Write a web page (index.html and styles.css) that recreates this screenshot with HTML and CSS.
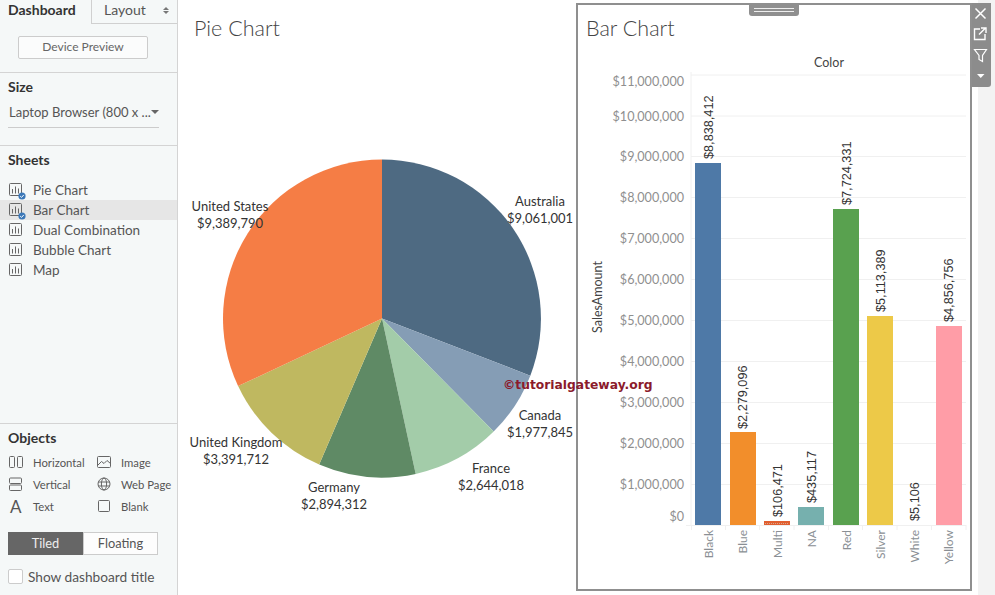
FILE: index.html
```html
<!DOCTYPE html>
<html lang="en">
<head>
<meta charset="utf-8">
<title>Dashboard</title>
<link rel="stylesheet" href="styles.css">
</head>
<body>
<svg class="defs" width="0" height="0" aria-hidden="true">
  <symbol id="sheet" viewBox="0 0 14 14"><rect x="0.5" y="0.5" width="12" height="12" rx="1" fill="none" stroke="#666"/><path d="M3.500 6v4.500M6.500 3.500v7M9.500 5.500v5" fill="none" stroke="#666"/></symbol>
  <symbol id="check" viewBox="0 0 8 8"><circle cx="4" cy="4" r="3.600" fill="#3c78b8"/><path d="M2.200 4.100l1.300 1.300 2.300-2.500" fill="none" stroke="#fff" stroke-width="1"/></symbol>
</svg>
<aside class="sidebar">
  <div class="tabs">
    <div class="tab tab-active">Dashboard</div>
    <div class="tab tab-other"><span>Layout</span><span class="updown"><i class="up"></i><i class="down"></i></span></div>
  </div>
  <section class="device"><div class="device-btn">Device Preview</div></section>
  <section class="size">
    <h3>Size</h3>
    <div class="select"><span>Laptop Browser (800 x ...</span><i class="caret"></i></div>
  </section>
  <section class="sheets">
    <h3>Sheets</h3>
    <ul class="sheet-list">
      <li class="sheet-row"><span class="sheet-icon"><svg class="ic-sheet"><use href="#sheet"/></svg><svg class="ic-check"><use href="#check"/></svg></span>Pie Chart</li>
      <li class="sheet-row selected"><span class="sheet-icon"><svg class="ic-sheet"><use href="#sheet"/></svg><svg class="ic-check"><use href="#check"/></svg></span>Bar Chart</li>
      <li class="sheet-row"><span class="sheet-icon"><svg class="ic-sheet"><use href="#sheet"/></svg></span>Dual Combination</li>
      <li class="sheet-row"><span class="sheet-icon"><svg class="ic-sheet"><use href="#sheet"/></svg></span>Bubble Chart</li>
      <li class="sheet-row"><span class="sheet-icon"><svg class="ic-sheet"><use href="#sheet"/></svg></span>Map</li>
    </ul>
  </section>
  <section class="objects">
    <h3>Objects</h3>
    <div class="obj-grid">
      <div class="obj"><svg class="obj-icon" viewBox="0 0 16 14"><rect x="1.500" y="1.500" width="5" height="11" rx="1"/><rect x="9.500" y="1.500" width="5" height="11" rx="1"/></svg><span>Horizontal</span></div>
      <div class="obj"><svg class="obj-icon" viewBox="0 0 16 14"><rect x="1.500" y="1.500" width="13" height="11" rx="1"/><path d="M2 10l3.500-3.500 2.500 2 3-3 3.500 3"/></svg><span>Image</span></div>
      <div class="obj"><svg class="obj-icon" viewBox="0 0 16 14"><rect x="1.500" y="1" width="12" height="5.500" rx="1"/><rect x="1.500" y="8" width="12" height="5.500" rx="1"/></svg><span>Vertical</span></div>
      <div class="obj"><svg class="obj-icon" viewBox="0 0 16 14"><circle cx="8" cy="7" r="6"/><ellipse cx="8" cy="7" rx="2.600" ry="6"/><path d="M2 5h12M2 9h12"/></svg><span>Web Page</span></div>
      <div class="obj"><span class="obj-a">A</span><span>Text</span></div>
      <div class="obj"><svg class="obj-icon" viewBox="0 0 16 14"><rect x="2.500" y="1.500" width="11" height="11" rx="1"/></svg><span>Blank</span></div>
    </div>
    <div class="toggle"><div class="tog tog-on">Tiled</div><div class="tog tog-off">Floating</div></div>
    <label class="show-title"><span class="box"></span>Show dashboard title</label>
  </section>
</aside>

<main class="canvas">
  <section class="pie-panel">
    <h2 class="chart-title">Pie Chart</h2>
    <svg class="pie-svg" viewBox="178 40 398 555" width="398" height="555">
      <path d="M382 318.500V159.500A159 159 0 0 1 530.300 375.700Z" fill="#4e6a82"/>
      <path d="M382 318.500L530.300 375.700A159 159 0 0 1 493.700 431.600Z" fill="#859db5"/>
      <path d="M382 318.500L493.700 431.600A159 159 0 0 1 415.700 473.900Z" fill="#a3cca9"/>
      <path d="M382 318.500L415.700 473.900A159 159 0 0 1 319.200 464.600Z" fill="#5f8a65"/>
      <path d="M382 318.500L319.200 464.600A159 159 0 0 1 238.100 386.100Z" fill="#bfb860"/>
      <path d="M382 318.500L238.100 386.100A159 159 0 0 1 382 159.500Z" fill="#f57d45"/>
      <g class="pie-label">
        <text x="540" y="206">Australia</text><text x="540" y="223">$9,061,001</text>
        <text x="540" y="420">Canada</text><text x="540" y="437">$1,977,845</text>
        <text x="491" y="473">France</text><text x="491" y="490">$2,644,018</text>
        <text x="334" y="492">Germany</text><text x="334" y="509">$2,894,312</text>
        <text x="236" y="447">United Kingdom</text><text x="236" y="464">$3,391,712</text>
        <text x="230" y="211">United States</text><text x="230" y="228">$9,389,790</text>
      </g>
    </svg>
  </section>

  <section class="bar-panel">
    <div class="handle"><i></i><i></i></div>
    <h2 class="chart-title">Bar Chart</h2>
    <svg class="bar-svg" viewBox="578 42 392 546" width="392" height="546">
      <g class="grid">
        <path d="M691 75H966M691 116H966M691 156.500H966M691 197.500H966M691 238.500H966M691 279.500H966M691 320.500H966M691 361.500H966M691 402.500H966M691 443.500H966M691 484.500H966"/>
        <path d="M691 72V525M686 525.500H966M691.500 525V530M725.500 525V530M759.500 525V530M794 525V530M828.500 525V530M862.500 525V530M897 525V530M931.500 525V530M966 525V530"/>
      </g>
      <g class="ticks">
        <text x="684" y="86">$11,000,000</text><text x="684" y="121">$10,000,000</text>
        <text x="684" y="161">$9,000,000</text><text x="684" y="202">$8,000,000</text>
        <text x="684" y="243">$7,000,000</text><text x="684" y="284">$6,000,000</text>
        <text x="684" y="325">$5,000,000</text><text x="684" y="366">$4,000,000</text>
        <text x="684" y="407">$3,000,000</text><text x="684" y="448">$2,000,000</text>
        <text x="684" y="489">$1,000,000</text><text x="684" y="521">$0</text>
      </g>
      <text class="axis-title" x="829" y="67">Color</text>
      <text class="axis-title" transform="rotate(-90 602 297)" x="602" y="297">SalesAmount</text>
      <rect x="695" y="163" width="26" height="362" fill="#4e79a7"/>
      <rect x="730" y="432" width="26" height="93" fill="#f28e2b"/>
      <rect x="764" y="521" width="26" height="4" fill="#e15f30"/>
      <path class="dots" d="M765 523.500H789"/>
      <rect x="798" y="507" width="26" height="18" fill="#76b0ae"/>
      <rect x="833" y="209" width="26" height="316" fill="#59a14f"/>
      <rect x="867" y="316" width="26" height="209" fill="#edc948"/>
      <rect x="936" y="326" width="26" height="199" fill="#ff9da7"/>
      <g class="values">
        <text transform="rotate(-90 713 159)" x="713" y="159">$8,838,412</text>
        <text transform="rotate(-90 747 429)" x="747" y="429">$2,279,096</text>
        <text transform="rotate(-90 782 517)" x="782" y="517">$106,471</text>
        <text transform="rotate(-90 816 503)" x="816" y="503">$435,117</text>
        <text transform="rotate(-90 851 205)" x="851" y="205">$7,724,331</text>
        <text transform="rotate(-90 885 312)" x="885" y="312">$5,113,389</text>
        <text transform="rotate(-90 919 521)" x="919" y="521">$5,106</text>
        <text transform="rotate(-90 953 322)" x="953" y="322">$4,856,756</text>
      </g>
      <g class="cats">
        <text transform="rotate(-90 713 530)" x="713" y="530">Black</text>
        <text transform="rotate(-90 747 530)" x="747" y="530">Blue</text>
        <text transform="rotate(-90 782 530)" x="782" y="530">Multi</text>
        <text transform="rotate(-90 816 530)" x="816" y="530">NA</text>
        <text transform="rotate(-90 851 530)" x="851" y="530">Red</text>
        <text transform="rotate(-90 885 530)" x="885" y="530">Silver</text>
        <text transform="rotate(-90 919 530)" x="919" y="530">White</text>
        <text transform="rotate(-90 953 530)" x="953" y="530">Yellow</text>
      </g>
    </svg>
    <div class="toolbar">
      <svg viewBox="0 0 19 84" width="19" height="84">
        <path d="M3.500 5.500l10 10M13.500 5.500l-10 10" stroke="#fff" stroke-width="1.500" fill="none"/>
        <path d="M8 26H2.500V36.500H13V31M7 31.500l6-6M9 25h5v5" stroke="#fff" stroke-width="1.400" fill="none"/>
        <path d="M2.500 46.500h12L10.500 52.500v6l-3.500-2v-4Z" stroke="#fff" stroke-width="1.200" fill="none"/>
        <path d="M5 71h7.500l-3.750 4Z" fill="#fff"/>
      </svg>
    </div>
  </section>
  <div class="strip"></div>
  <div class="watermark">©tutorialgateway.org</div>
</main>
</body>
</html>
```
FILE: styles.css
```css
* { box-sizing: border-box; }
html, body { margin: 0; padding: 0; }
body {
  width: 995px; height: 595px; overflow: hidden; display: flex;
  font-family: Lato, "Open Sans", sans-serif; color: #555; background: #fff;
}
.defs { position: absolute; }
.sidebar {
  flex: 0 0 178px; height: 595px; display: flex; flex-direction: column;
  background: #f5f8f8; border-right: 1px solid #d4d4d4; font-size: 13px;
}
h3 { margin: 0; font-size: 14px; font-weight: 700; color: #333; line-height: 18px; }
.tabs { display: flex; height: 24px; flex: none; }
.tab { height: 24px; line-height: 20px; font-size: 14px; }
.tab-active { width: 92px; padding-left: 8px; font-weight: 700; color: #333; border-right: 1px solid #d0d0d0; }
.tab-other { flex: 1; padding: 0 8px 3px 12px; display: flex; justify-content: space-between; align-items: center; border-bottom: 1px solid #d0d0d0; color: #555; }
.updown { display: flex; flex-direction: column; gap: 1px; }
.updown i { display: block; width: 0; height: 0; border-left: 3px solid transparent; border-right: 3px solid transparent; }
.updown .up { border-bottom: 3px solid #777; }
.updown .down { border-top: 3px solid #777; }
.device { flex: none; height: 49px; padding: 12px 0 0 18px; border-bottom: 1px solid #d4d4d4; }
.device-btn { width: 130px; height: 23px; border: 1px solid #ccc; border-radius: 2px; background: #fbfcfc; text-align: center; line-height: 20px; font-size: 12px; color: #666; }
.size { flex: none; height: 73px; padding: 5px 0 0 8px; border-bottom: 1px solid #d4d4d4; }
.select { width: 151px; height: 24px; margin-top: 8px; border-bottom: 1px solid #ccc; display: flex; align-items: center; justify-content: space-between; font-size: 13px; padding: 0 0 8px 1px; }
.caret { width: 0; height: 0; border-left: 4px solid transparent; border-right: 4px solid transparent; border-top: 4px solid #666; }
.sheets { flex: 1; padding-top: 5px; }
.sheets h3 { padding-left: 8px; }
.sheet-list { list-style: none; margin: 11px 0 0; padding: 0; }
.sheet-row { height: 20px; line-height: 20px; padding-left: 33px; position: relative; font-size: 13.500px; color: #555; }
.selected { background: #e6e6e6; }
.sheet-icon { position: absolute; left: 9px; top: 3px; width: 14px; height: 14px; }
.ic-sheet { position: absolute; left: 0; top: 0; width: 14px; height: 14px; }
.ic-check { position: absolute; left: 9px; top: 9px; width: 8px; height: 8px; }
.objects { flex: none; height: 172px; padding: 5px 0 0 8px; border-top: 1px solid #d4d4d4; }
.obj-grid { display: grid; grid-template-columns: 88px 80px; grid-auto-rows: 22px; margin-top: 4px; }
.obj { display: flex; align-items: center; font-size: 11.300px; color: #555; white-space: nowrap; }
.obj-icon { width: 16px; height: 14px; margin-right: 9px; fill: none; stroke: #666; stroke-width: 1; flex: none; }
.obj-a { width: 16px; margin-right: 9px; font-size: 17px; color: #555; flex: none; padding-left: 2px; }
.toggle { display: flex; width: 150px; height: 23px; margin-top: 15px; font-size: 12.800px; }
.tog { line-height: 22px; text-align: center; }
.tog-on { width: 75px; background: #666; color: #eee; }
.tog-off { width: 75px; background: #fdfdfd; border: 1px solid #ccc; color: #555; line-height: 21px; }
.show-title { display: flex; align-items: center; margin-top: 13px; font-size: 13.700px; }
.box { width: 15px; height: 15px; border: 1px solid #ccc; border-radius: 2px; background: #fff; margin-right: 5px; }
.canvas { flex: 1; height: 595px; display: flex; position: relative; min-width: 0; }
.chart-title { margin: 0; font-size: 21.500px; font-weight: 300; color: #444; line-height: 26px; }
.pie-panel { flex: 0 0 398px; height: 595px; }
.pie-panel .chart-title { padding: 15px 0 0 16px; height: 40px; }
.pie-svg { display: block; }
.pie-label text { font-size: 13px; fill: #333; text-anchor: middle; }
.bar-panel { flex: 0 0 396px; height: 588px; margin-top: 3px; border: 2px solid #8f8f8f; background: #fff; position: relative; }
.bar-panel .chart-title { padding: 10px 0 0 8px; height: 37px; }
.bar-svg { display: block; }
.handle { position: absolute; top: -2px; left: 171px; width: 50px; height: 13px; background: #8f8f8f; border-radius: 0 0 3px 3px; display: flex; flex-direction: column; justify-content: center; gap: 2px; align-items: center; }
.handle i { display: block; width: 40px; height: 1px; background: #eee; }
.toolbar { position: absolute; top: -2px; left: 394px; width: 19px; height: 84px; background: #8c8c8c; border-radius: 0 0 3px 0; }
.toolbar svg { display: block; }
.grid path { fill: none; stroke: #f0f0f0; stroke-width: 1; }
.dots { stroke: #d9a58c; stroke-width: 1; stroke-dasharray: 1 1; fill: none; }
.ticks text { font-size: 12.600px; fill: #8f8f8f; text-anchor: end; }
.axis-title { font-size: 12.500px; fill: #444; text-anchor: middle; }
.values text { font-size: 12.700px; fill: #333; font-family: "Liberation Sans", sans-serif; }
.cats text { font-size: 12px; fill: #8a8f94; text-anchor: end; }
.strip { flex: 1; background: #f3f3f3; margin-left: 6px; }
.watermark { position: absolute; left: 325px; top: 378px; font-family: "DejaVu Sans", sans-serif; font-weight: 700; font-size: 12.300px; color: #8b1a2b; white-space: nowrap; }
```
